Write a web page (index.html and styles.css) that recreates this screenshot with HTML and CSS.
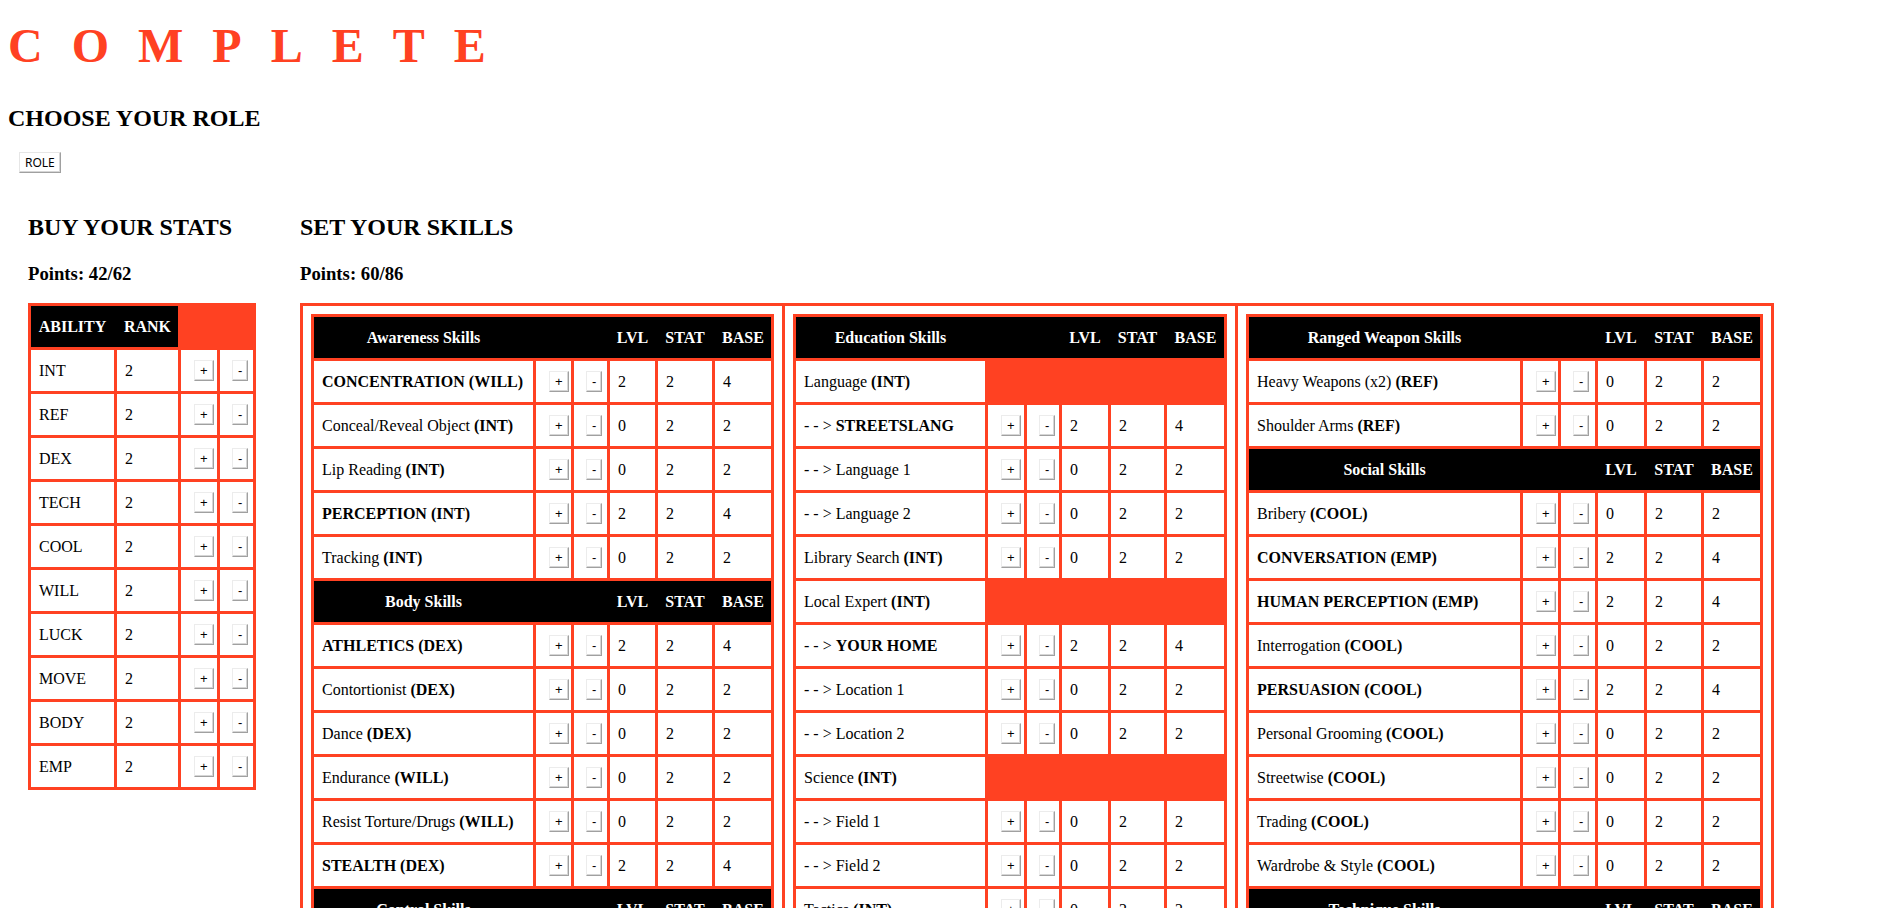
FILE: index.html
```html
<!DOCTYPE html>
<html lang="en">
<head>
<meta charset="utf-8">
<title>Complete</title>
<link rel="stylesheet" href="styles.css">
</head>
<body>
<div class="page">
  <h1 class="title">COMPLETE</h1>
  <h2 class="role-heading">CHOOSE YOUR ROLE</h2>
  <div class="role-row"><button class="role-btn">ROLE</button></div>

  <div class="sheet">
    <section class="stats">
      <h2 class="section-title">BUY YOUR STATS</h2>
      <h3 class="points">Points: 42/62</h3>
      <table class="grid stats-table">
        <tr><th>ABILITY</th><th>RANK</th></tr>
        <tr><td>INT</td><td>2</td><td class="p"><button class="btn">+</button></td><td class="m"><button class="btn">-</button></td></tr>
        <tr><td>REF</td><td>2</td><td class="p"><button class="btn">+</button></td><td class="m"><button class="btn">-</button></td></tr>
        <tr><td>DEX</td><td>2</td><td class="p"><button class="btn">+</button></td><td class="m"><button class="btn">-</button></td></tr>
        <tr><td>TECH</td><td>2</td><td class="p"><button class="btn">+</button></td><td class="m"><button class="btn">-</button></td></tr>
        <tr><td>COOL</td><td>2</td><td class="p"><button class="btn">+</button></td><td class="m"><button class="btn">-</button></td></tr>
        <tr><td>WILL</td><td>2</td><td class="p"><button class="btn">+</button></td><td class="m"><button class="btn">-</button></td></tr>
        <tr><td>LUCK</td><td>2</td><td class="p"><button class="btn">+</button></td><td class="m"><button class="btn">-</button></td></tr>
        <tr><td>MOVE</td><td>2</td><td class="p"><button class="btn">+</button></td><td class="m"><button class="btn">-</button></td></tr>
        <tr><td>BODY</td><td>2</td><td class="p"><button class="btn">+</button></td><td class="m"><button class="btn">-</button></td></tr>
        <tr><td>EMP</td><td>2</td><td class="p"><button class="btn">+</button></td><td class="m"><button class="btn">-</button></td></tr>
      </table>
    </section>

    <section class="skills">
      <h2 class="section-title">SET YOUR SKILLS</h2>
      <h3 class="points">Points: 60/86</h3>
      <div class="frame">
        <div class="frame-col">
          <table class="grid t1">
            <tr><th>Awareness Skills</th><th></th><th></th><th>LVL</th><th>STAT</th><th>BASE</th></tr>
            <tr><td><b>CONCENTRATION (WILL)</b></td><td class="p"><button class="btn">+</button></td><td class="m"><button class="btn">-</button></td><td>2</td><td>2</td><td>4</td></tr>
            <tr><td>Conceal/Reveal Object <b>(INT)</b></td><td class="p"><button class="btn">+</button></td><td class="m"><button class="btn">-</button></td><td>0</td><td>2</td><td>2</td></tr>
            <tr><td>Lip Reading <b>(INT)</b></td><td class="p"><button class="btn">+</button></td><td class="m"><button class="btn">-</button></td><td>0</td><td>2</td><td>2</td></tr>
            <tr><td><b>PERCEPTION (INT)</b></td><td class="p"><button class="btn">+</button></td><td class="m"><button class="btn">-</button></td><td>2</td><td>2</td><td>4</td></tr>
            <tr><td>Tracking <b>(INT)</b></td><td class="p"><button class="btn">+</button></td><td class="m"><button class="btn">-</button></td><td>0</td><td>2</td><td>2</td></tr>
            <tr><th>Body Skills</th><th></th><th></th><th>LVL</th><th>STAT</th><th>BASE</th></tr>
            <tr><td><b>ATHLETICS (DEX)</b></td><td class="p"><button class="btn">+</button></td><td class="m"><button class="btn">-</button></td><td>2</td><td>2</td><td>4</td></tr>
            <tr><td>Contortionist <b>(DEX)</b></td><td class="p"><button class="btn">+</button></td><td class="m"><button class="btn">-</button></td><td>0</td><td>2</td><td>2</td></tr>
            <tr><td>Dance <b>(DEX)</b></td><td class="p"><button class="btn">+</button></td><td class="m"><button class="btn">-</button></td><td>0</td><td>2</td><td>2</td></tr>
            <tr><td>Endurance <b>(WILL)</b></td><td class="p"><button class="btn">+</button></td><td class="m"><button class="btn">-</button></td><td>0</td><td>2</td><td>2</td></tr>
            <tr><td>Resist Torture/Drugs <b>(WILL)</b></td><td class="p"><button class="btn">+</button></td><td class="m"><button class="btn">-</button></td><td>0</td><td>2</td><td>2</td></tr>
            <tr><td><b>STEALTH (DEX)</b></td><td class="p"><button class="btn">+</button></td><td class="m"><button class="btn">-</button></td><td>2</td><td>2</td><td>4</td></tr>
            <tr><th>Control Skills</th><th></th><th></th><th>LVL</th><th>STAT</th><th>BASE</th></tr>
            <tr><td>Drive Land Vehicle <b>(REF)</b></td><td class="p"><button class="btn">+</button></td><td class="m"><button class="btn">-</button></td><td>0</td><td>2</td><td>2</td></tr>
            <tr><td>Pilot Air Vehicle (x2) <b>(REF)</b></td><td class="p"><button class="btn">+</button></td><td class="m"><button class="btn">-</button></td><td>0</td><td>2</td><td>2</td></tr>
          </table>
        </div>
        <div class="frame-col">
          <table class="grid t2">
            <tr><th>Education Skills</th><th></th><th></th><th>LVL</th><th>STAT</th><th>BASE</th></tr>
            <tr><td>Language <b>(INT)</b></td></tr>
            <tr><td>- - &gt; <b>STREETSLANG</b></td><td class="p"><button class="btn">+</button></td><td class="m"><button class="btn">-</button></td><td>2</td><td>2</td><td>4</td></tr>
            <tr><td>- - &gt; Language 1</td><td class="p"><button class="btn">+</button></td><td class="m"><button class="btn">-</button></td><td>0</td><td>2</td><td>2</td></tr>
            <tr><td>- - &gt; Language 2</td><td class="p"><button class="btn">+</button></td><td class="m"><button class="btn">-</button></td><td>0</td><td>2</td><td>2</td></tr>
            <tr><td>Library Search <b>(INT)</b></td><td class="p"><button class="btn">+</button></td><td class="m"><button class="btn">-</button></td><td>0</td><td>2</td><td>2</td></tr>
            <tr><td>Local Expert <b>(INT)</b></td></tr>
            <tr><td>- - &gt; <b>YOUR HOME</b></td><td class="p"><button class="btn">+</button></td><td class="m"><button class="btn">-</button></td><td>2</td><td>2</td><td>4</td></tr>
            <tr><td>- - &gt; Location 1</td><td class="p"><button class="btn">+</button></td><td class="m"><button class="btn">-</button></td><td>0</td><td>2</td><td>2</td></tr>
            <tr><td>- - &gt; Location 2</td><td class="p"><button class="btn">+</button></td><td class="m"><button class="btn">-</button></td><td>0</td><td>2</td><td>2</td></tr>
            <tr><td>Science <b>(INT)</b></td></tr>
            <tr><td>- - &gt; Field 1</td><td class="p"><button class="btn">+</button></td><td class="m"><button class="btn">-</button></td><td>0</td><td>2</td><td>2</td></tr>
            <tr><td>- - &gt; Field 2</td><td class="p"><button class="btn">+</button></td><td class="m"><button class="btn">-</button></td><td>0</td><td>2</td><td>2</td></tr>
            <tr><td>Tactics <b>(INT)</b></td><td class="p"><button class="btn">+</button></td><td class="m"><button class="btn">-</button></td><td>0</td><td>2</td><td>2</td></tr>
            <tr><td>Wilderness Survival <b>(INT)</b></td><td class="p"><button class="btn">+</button></td><td class="m"><button class="btn">-</button></td><td>0</td><td>2</td><td>2</td></tr>
          </table>
        </div>
        <div class="frame-col">
          <table class="grid t3">
            <tr><th>Ranged Weapon Skills</th><th></th><th></th><th>LVL</th><th>STAT</th><th>BASE</th></tr>
            <tr><td>Heavy Weapons (x2) <b>(REF)</b></td><td class="p"><button class="btn">+</button></td><td class="m"><button class="btn">-</button></td><td>0</td><td>2</td><td>2</td></tr>
            <tr><td>Shoulder Arms <b>(REF)</b></td><td class="p"><button class="btn">+</button></td><td class="m"><button class="btn">-</button></td><td>0</td><td>2</td><td>2</td></tr>
            <tr><th>Social Skills</th><th></th><th></th><th>LVL</th><th>STAT</th><th>BASE</th></tr>
            <tr><td>Bribery <b>(COOL)</b></td><td class="p"><button class="btn">+</button></td><td class="m"><button class="btn">-</button></td><td>0</td><td>2</td><td>2</td></tr>
            <tr><td><b>CONVERSATION (EMP)</b></td><td class="p"><button class="btn">+</button></td><td class="m"><button class="btn">-</button></td><td>2</td><td>2</td><td>4</td></tr>
            <tr><td><b>HUMAN PERCEPTION (EMP)</b></td><td class="p"><button class="btn">+</button></td><td class="m"><button class="btn">-</button></td><td>2</td><td>2</td><td>4</td></tr>
            <tr><td>Interrogation <b>(COOL)</b></td><td class="p"><button class="btn">+</button></td><td class="m"><button class="btn">-</button></td><td>0</td><td>2</td><td>2</td></tr>
            <tr><td><b>PERSUASION (COOL)</b></td><td class="p"><button class="btn">+</button></td><td class="m"><button class="btn">-</button></td><td>2</td><td>2</td><td>4</td></tr>
            <tr><td>Personal Grooming <b>(COOL)</b></td><td class="p"><button class="btn">+</button></td><td class="m"><button class="btn">-</button></td><td>0</td><td>2</td><td>2</td></tr>
            <tr><td>Streetwise <b>(COOL)</b></td><td class="p"><button class="btn">+</button></td><td class="m"><button class="btn">-</button></td><td>0</td><td>2</td><td>2</td></tr>
            <tr><td>Trading <b>(COOL)</b></td><td class="p"><button class="btn">+</button></td><td class="m"><button class="btn">-</button></td><td>0</td><td>2</td><td>2</td></tr>
            <tr><td>Wardrobe &amp; Style <b>(COOL)</b></td><td class="p"><button class="btn">+</button></td><td class="m"><button class="btn">-</button></td><td>0</td><td>2</td><td>2</td></tr>
            <tr><th>Technique Skills</th><th></th><th></th><th>LVL</th><th>STAT</th><th>BASE</th></tr>
            <tr><td>Air Vehicle Tech <b>(TECH)</b></td><td class="p"><button class="btn">+</button></td><td class="m"><button class="btn">-</button></td><td>0</td><td>2</td><td>2</td></tr>
            <tr><td>Basic Tech <b>(TECH)</b></td><td class="p"><button class="btn">+</button></td><td class="m"><button class="btn">-</button></td><td>0</td><td>2</td><td>2</td></tr>
          </table>
        </div>
      </div>
    </section>
  </div>
</div>
</body>
</html>
```

FILE: styles.css
```css
body {
  margin: 0;
  background: #fff;
  color: #000;
  font-family: "Liberation Serif", "Times New Roman", serif;
  font-size: 16px;
}

.page {
  padding: 18px 8px 40px;
}

.title {
  margin: 0;
  font-size: 48px;
  line-height: 55px;
  font-weight: bold;
  letter-spacing: 29px;
  color: #ff4122;
}

.role-heading {
  margin: 31px 0 0;
  font-size: 24px;
  line-height: 28px;
}

.role-row {
  margin-top: 20px;
  padding-left: 11px;
}

.role-btn {
  display: block;
  appearance: none;
  font-family: "Noto Sans", "Liberation Sans", sans-serif;
  font-size: 12px;
  line-height: 15px;
  padding: 2px 5px;
  color: #000;
  background: #fff;
  border: 1px solid;
  border-color: #e6e6e6 #a0a0a0 #a0a0a0 #e6e6e6;
  box-shadow: inset -1px -1px 0 #d6d6d6;
  border-radius: 0;
}

.sheet {
  display: flex;
  align-items: flex-start;
  gap: 44px;
  margin-top: 40px;
  padding-left: 20px;
}

.section-title {
  margin: 0;
  font-size: 24px;
  line-height: 28px;
}

.points {
  margin: 22px 0 0;
  font-size: 18.72px;
  line-height: 22px;
}

.stats-table,
.frame {
  margin-top: 18px;
}

.frame {
  display: flex;
  border: 3px solid #ff4122;
}

.frame-col {
  padding: 8px;
}

.frame-col + .frame-col {
  border-left: 3px solid #ff4122;
}

/* tables */
.grid {
  border-collapse: separate;
  border-spacing: 0;
  background: #ff4122;
  padding: 0 3px 3px 3px;
}

.grid th,
.grid td {
  box-sizing: border-box;
  height: 44px;
  border-top: 3px solid #ff4122;
  vertical-align: middle;
  white-space: nowrap;
}

.grid th {
  padding: 0;
  background: #000;
  color: #fff;
  font-weight: bold;
  text-align: center;
}

.grid th + th {
  padding-left: 3px;
}

.grid td {
  padding: 0 8px;
  background: #fff;
  text-align: left;
}

.grid td + td {
  border-left: 3px solid #ff4122;
}

.grid td.p {
  padding: 0 0 0 13px;
}

.grid td.m {
  padding: 0 0 0 12px;
}

.btn {
  appearance: none;
  font-family: "Liberation Sans", Arial, sans-serif;
  font-size: 13px;
  line-height: 15px;
  padding: 2px 5px;
  margin: 0;
  color: #000;
  background: #fff;
  border: 1px solid;
  border-color: #ececec #a0a0a0 #a0a0a0 #ececec;
  box-shadow: inset -1px -1px 0 #d6d6d6;
  border-radius: 0;
  vertical-align: middle;
}

/* column widths */
.stats-table tr > :nth-child(1) { width: 83px; }
.stats-table tr > :nth-child(2) { width: 64px; }
.stats-table tr > :nth-child(3) { width: 39px; }
.stats-table tr > :nth-child(4) { width: 36px; }

.t1 tr > :nth-child(1) { width: 219px; }
.t1 tr > :nth-child(2) { width: 38px; }
.t1 tr > :nth-child(3) { width: 36px; }
.t1 tr > :nth-child(4) { width: 48px; }
.t1 tr > :nth-child(5) { width: 57px; }
.t1 tr > :nth-child(6) { width: 59px; }

.t2 tr > :nth-child(1) { width: 189px; }
.t2 tr > :nth-child(2) { width: 39px; }
.t2 tr > :nth-child(3) { width: 35px; }
.t2 tr > :nth-child(4) { width: 49px; }
.t2 tr > :nth-child(5) { width: 56px; }
.t2 tr > :nth-child(6) { width: 60px; }

.t3 tr > :nth-child(1) { width: 271px; }
.t3 tr > :nth-child(2) { width: 38px; }
.t3 tr > :nth-child(3) { width: 37px; }
.t3 tr > :nth-child(4) { width: 49px; }
.t3 tr > :nth-child(5) { width: 57px; }
.t3 tr > :nth-child(6) { width: 59px; }
```
